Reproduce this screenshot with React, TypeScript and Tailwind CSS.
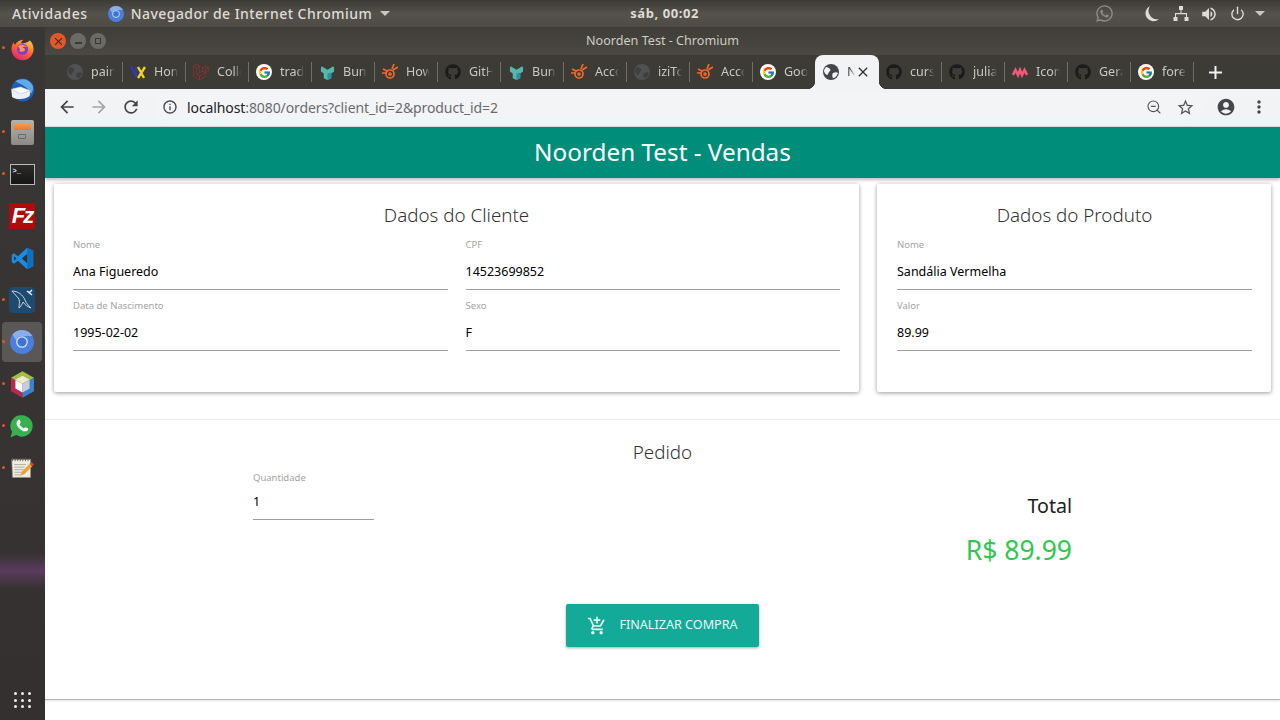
import { FaGithub, FaWhatsapp } from "react-icons/fa"
import { FcGoogle } from "react-icons/fc"
import { SiLaravel } from "react-icons/si"
import {
  MdAccountCircle,
  MdArrowBack,
  MdArrowForward,
  MdClose,
  MdInfoOutline,
  MdMoreVert,
  MdOutlineAddShoppingCart,
  MdRefresh,
  MdStarBorder,
  MdVolumeUp,
} from "react-icons/md"
import { Power, ZoomOut } from "lucide-react"

const DimGlobe = () => (
  <svg width="16" height="16" viewBox="0 0 16 16">
    <circle cx="8" cy="8" r="8" fill="#505154" />
    <path d="M3 3c2 0 3 1 4 2s0 2-1 3-1 3-2 3-3-3-3-4 1-3 2-4zM10 9c2-1 4-1 5 0-1 3-3 5-5 5-1-1-1-4 0-5z" fill="#3f3f3d" />
  </svg>
)

const ActiveGlobe = () => (
  <svg width="16" height="16" viewBox="0 0 16 16">
    <circle cx="8" cy="8" r="8" fill="#45464a" />
    <path d="M3 3c2 0 3 1 4 2s0 2-1 3-1 3-2 3-3-3-3-4 1-3 2-4zM10 9c2-1 4-1 5 0-1 3-3 5-5 5-1-1-1-4 0-5z" fill="#f2f3f5" />
  </svg>
)

const Nx = () => (
  <svg width="16" height="16" viewBox="0 0 16 16" fill="none">
    <path d="M1 2l5 11V3" stroke="#2c3bbd" strokeWidth="2" />
    <path d="M8 3l6 11M15 3L8 14" stroke="#f0d11c" strokeWidth="2.4" />
  </svg>
)

const Bunny = () => (
  <svg width="15" height="15" viewBox="0 0 16 16">
    <path d="M1 3c0-1 1-2 2-1l5 3 5-3c1-1 2 0 2 1v4l-3 2v5l-4 2-4-2V9L1 7z" fill="#55b8ae" />
    <path d="M8 9l4-1v6l-4 2z" fill="#2f8fa3" />
  </svg>
)

const Rabbit = () => (
  <svg width="16" height="16" viewBox="0 0 16 16" fill="none" stroke="#ef6a2e" strokeWidth="1.7">
    <path d="M1 5l4 2M0 9h4M12 0l-2 5M16 3l-5 3" />
    <circle cx="8" cy="10" r="4" />
    <circle cx="8" cy="10" r="1" fill="#ef6a2e" />
  </svg>
)

const Icons8 = () => (
  <svg width="16" height="16" viewBox="0 0 16 16" fill="none">
    <path d="M1 11l2.500-5L6 11l2-5 2 5 2.500-5 2.500 5" stroke="#ee5a78" strokeWidth="2.6" />
  </svg>
)

const Github = () => <FaGithub size={16} color="#1b1b1b" />
const Google = () => (
  <span className="flex h-4 w-4 items-center justify-center rounded-full bg-white">
    <FcGoogle size={13} />
  </span>
)

const tabs = [
  { icon: <DimGlobe />, label: "pain" },
  { icon: <Nx />, label: "Hom" },
  { icon: <SiLaravel size={16} color="#b8282e" />, label: "Colle" },
  { icon: <Google />, label: "trad" },
  { icon: <Bunny />, label: "Bunny" },
  { icon: <Rabbit />, label: "How" },
  { icon: <Github />, label: "GitHub" },
  { icon: <Bunny />, label: "Bunny" },
  { icon: <Rabbit />, label: "Acco" },
  { icon: <DimGlobe />, label: "iziToast" },
  { icon: <Rabbit />, label: "Acco" },
  { icon: <Google />, label: "Goog" },
  { icon: <ActiveGlobe />, label: "N", active: true },
  { icon: <Github />, label: "curso" },
  { icon: <Github />, label: "julian" },
  { icon: <Icons8 />, label: "Icons" },
  { icon: <Github />, label: "Gerad" },
  { icon: <Google />, label: "fore" },
]

const Chromium = ({ size = 16 }: { size?: number }) => (
  <svg width={size} height={size} viewBox="0 0 24 24">
    <circle cx="12" cy="12" r="12" fill="#4a7fdc" />
    <path d="M12 0a12 12 0 0 1 10.400 6H12a6 6 0 0 0-5.800 4.400L2.500 4.600A12 12 0 0 1 12 0z" fill="#8aaeea" />
    <circle cx="12" cy="12" r="5.200" fill="#3f74d6" stroke="#d7e4f8" strokeWidth="1.300" />
  </svg>
)

const dockIcons = [
  {
    dot: true,
    icon: (
      <svg width="25" height="25" viewBox="0 0 34 34">
        <defs>
          <linearGradient id="fx" x1="0.8" y1="0" x2="0.2" y2="1">
            <stop offset="0" stopColor="#ffd23a" />
            <stop offset="0.45" stopColor="#ff6a2b" />
            <stop offset="1" stopColor="#e2206e" />
          </linearGradient>
        </defs>
        <path d="M27 6c3 3 5 7 5 12a15 15 0 0 1-30 0c0-4 1-7 3-10 0 2 1 3 2 4 2-4 6-7 11-7-2 2-3 3-3 5 5 0 8-1 12-4z" fill="url(#fx)" />
        <circle cx="17" cy="18" r="7.500" fill="#7a3ce0" />
        <path d="M11 14c3-3 9-3 12 1-3-1-5-1-6 1 3 0 4 2 3 4-2 2-6 2-8 0 2 0 2-2 1-3z" fill="#ff9a3a" />
      </svg>
    ),
  },
  {
    dot: false,
    icon: (
      <svg width="26" height="26" viewBox="0 0 34 34">
        <circle cx="18" cy="17" r="15" fill="#1b5fb8" />
        <path d="M8 6c7-5 18-4 23 5 1 4 0 8-2 11-3-7-11-12-21-16z" fill="#62a9e8" />
        <path d="M3 16l12-3 13 5-1 7c-6 5-17 5-23 1z" fill="#eef0f4" />
        <path d="M3 16l12 6 13-4-13-5z" fill="#ffffff" stroke="#aab8ca" strokeWidth="0.700" />
      </svg>
    ),
  },
  {
    dot: true,
    icon: (
      <span className="flex h-[25px] w-[23px] flex-col overflow-hidden rounded-[2px] bg-gradient-to-b from-[#b5b2ac] to-[#8d8a85]">
        <span className="mx-[3px] mt-[3px] h-[7px] rounded-[1px] bg-gradient-to-b from-[#f6a04d] to-[#e77a28]" />
        <span className="mx-auto mt-[4px] h-[5px] w-[8px] rounded-[1px] border border-[#6c6a66]" />
      </span>
    ),
  },
  {
    dot: true,
    icon: (
      <span className="flex h-[21px] w-[25px] border border-[#b9b9b6] bg-gradient-to-b from-[#2b2b2b] to-[#161616] pl-[2px] pt-[1px] font-['Liberation_Mono',monospace] text-[7px] font-bold leading-[10px] text-[#e8e8e8]">
        {">_"}
      </span>
    ),
  },
  {
    dot: false,
    icon: (
      <span className="flex h-[26px] w-[26px] items-center justify-center bg-[#b10a0a] font-['Liberation_Sans',sans-serif] text-[22px] font-bold italic leading-none tracking-[-2px] text-white">
        Fz
      </span>
    ),
  },
  {
    dot: false,
    icon: (
      <svg width="23" height="23" viewBox="0 0 30 30">
        <path d="M21 1l8 4v20l-8 4L9 18l-5 4-3-2v-10l3-2 5 4z" fill="#1a8ce0" />
        <path d="M21 1l8 4v20l-8 4z" fill="#0f6fc0" />
        <path d="M21 9l-7 6 7 6z" fill="#33302e" />
        <path d="M4 12l3 3-3 3z" fill="#33302e" />
      </svg>
    ),
  },
  {
    dot: true,
    icon: (
      <svg width="26" height="26" viewBox="0 0 26 26">
        <rect width="26" height="26" rx="4" fill="#1f4a70" />
        <path d="M3 4c6 0 11 4 13 9 1 3 3 5 6 8-3-1-6-3-8-6-1 2-2 5-4 6 0-3 1-6 0-9-2-3-5-5-7-8z" fill="none" stroke="#cfe0ee" strokeWidth="0.900" />
        <path d="M18 4l5 4M23 3l-3 3" stroke="#e6edf3" strokeWidth="1.500" />
      </svg>
    ),
  },
  {
    dot: true,
    icon: <Chromium size={24} />,
    active: true,
  },
  {
    dot: true,
    icon: (
      <svg width="23" height="27" viewBox="0 0 26 30">
        <path d="M13 0l13 7.500L13 15 0 7.500z" fill="#a3bf45" />
        <path d="M0 7.500L13 15v15L0 22.500z" fill="#b62a52" />
        <path d="M26 7.500L13 15v15l13-7.500z" fill="#3c80cf" />
        <path d="M13 5l8 4.500L13 14 5 9.500z" fill="#efe9d3" />
        <path d="M5 10l8 4.500V24l-8-4.500z" fill="#ffffff" />
        <path d="M21 10l-8 4.500V24l8-4.500z" fill="#c8ced8" />
      </svg>
    ),
  },
  {
    dot: true,
    icon: (
      <svg width="28" height="28" viewBox="0 0 34 34">
        <path d="M17 4a13 13 0 1 1-7 24l-7 3 2-7A13 13 0 0 1 17 4z" fill="#36b14e" />
        <path d="M12 10c1-1 2-1 2.500 0l1 3-1.500 2c1 2 3 4 5 5l2-1.500 3 1.200c1 .8.500 2-.5 3-3 2-7 0-10-3s-4.500-7-1.500-9.700z" fill="#ffffff" />
      </svg>
    ),
  },
  {
    dot: true,
    icon: (
      <svg width="24" height="24" viewBox="0 0 28 28">
        <path d="M2 4h22v21H3z" fill="#efece2" stroke="#8f8c82" strokeWidth="0.800" />
        <path d="M3 2v4M6 2v4M9 2v4M12 2v4M15 2v4M18 2v4M21 2v4" stroke="#55534d" strokeWidth="1" />
        <path d="M5 10h14M5 13h12M5 16h11M5 19h9M5 22h8" stroke="#a9a69b" strokeWidth="1" />
        <path d="M12 23l2-5 9-9 3 3-9 9z" fill="#f0a02e" />
        <path d="M23 9l2-2 3 3-2 2z" fill="#d9413a" />
      </svg>
    ),
  },
]

const Field = ({ label, value }: { label: string; value: string }) => (
  <div className="h-[61px]">
    <div className="pt-[2px] text-[9.5px] leading-[14px] text-[#a3a3a3]">{label}</div>
    <div className="mt-[10px] text-[12.5px] leading-[20px] text-black">{value}</div>
    <div className="mt-[7px] h-px bg-[#9e9e9e]" />
  </div>
)

export default function App() {
  return (
    <div className="flex h-[720px] w-[1280px] flex-col overflow-hidden bg-white font-['Noto_Sans',sans-serif]">
      {/* Top bar */}
      <div className="flex h-[27px] shrink-0 items-center bg-gradient-to-b from-[#3b3a35] via-[#55524b] to-[#4d4b44] pl-3 pr-[15px] text-[14px] font-medium text-[#dedcd6]">
        <span className="tracking-[0.6px]">Atividades</span>
        <span className="ml-5 flex items-center gap-[7px] tracking-[0.45px]">
          <Chromium />
          Navegador de Internet Chromium
          <span className="ml-[1px] h-0 w-0 border-x-[5px] border-t-[5px] border-x-transparent border-t-[#c9c7c1]" />
        </span>
        <span className="ml-[240px] text-[13px] font-bold tracking-[0.6px]">sáb, 00:02</span>
        <span className="ml-auto flex items-center text-[#dedcd6]">
          <FaWhatsapp size={19} color="#8e8c86" />
          <svg className="ml-[31px]" width="14" height="16" viewBox="0 0 14 16">
            <path d="M5 0a8 8 0 1 0 9 13A8.500 8.500 0 0 1 5 0z" fill="#dedcd6" />
          </svg>
          <svg className="ml-[14px]" width="16" height="16" viewBox="0 0 16 16" fill="#dedcd6">
            <path d="M6 0h4v4H8.500v3H14v4h1.500v4h-4v-4H13V8.200H3V11h1.500v4h-4v-4H2V7h5.500V4H6z" />
          </svg>
          <MdVolumeUp className="ml-[11px]" size={18} />
          <Power className="ml-[12px]" size={15} strokeWidth={2.2} />
          <span className="ml-[10px] h-0 w-0 border-x-[5px] border-t-[5px] border-x-transparent border-t-[#c9c7c1]" />
        </span>
      </div>

      <div className="flex min-h-0 flex-1">
        {/* Dock */}
        <div className="relative flex w-[45px] shrink-0 flex-col bg-gradient-to-b from-[#393735] to-[#343030]">
          {dockIcons.map((d, i) => (
            <div key={i} className="relative flex h-[42px] w-[45px] shrink-0 items-center justify-center">
              {d.active && <span className="absolute left-[2px] top-[1px] h-[40px] w-[40px] rounded-[4px] bg-[#5a5856]" />}
              {d.dot && <span className="absolute left-[2px] top-[19px] h-[3px] w-[3px] rounded-full bg-[#e95420]" />}
              <span className="relative flex pr-[1px]">{d.icon}</span>
            </div>
          ))}
          <div className="absolute left-0 right-0 top-[526px] h-[36px] bg-gradient-to-b from-transparent via-[#6a3f70] to-transparent opacity-70" />
          <div className="mb-[12px] mt-auto grid w-[18px] grid-cols-3 gap-[3.500px] self-center">
            {Array.from({ length: 9 }).map((_, i) => (
              <span key={i} className="h-[3px] w-[3px] rounded-full bg-[#eeeeee]" />
            ))}
          </div>
        </div>

        {/* Browser */}
        <div className="flex min-w-0 flex-1 flex-col">
          <div className="relative flex h-[28px] shrink-0 items-center justify-center bg-gradient-to-b from-[#3e3d37] to-[#4b4941] text-[12.6px] text-[#cfcdc6]">
            Noorden Test - Chromium
            <span className="absolute left-[5px] top-[6px] flex gap-1">
              <span className="flex h-4 w-4 items-center justify-center rounded-full bg-[#e2572a] text-[#3a2a20]">
                <MdClose size={13} />
              </span>
              <span className="flex h-4 w-4 items-center justify-center rounded-full bg-[#6b6a64]">
                <span className="mt-[4px] h-[2px] w-[7px] bg-[#3b3a35]" />
              </span>
              <span className="flex h-4 w-4 items-center justify-center rounded-full bg-[#6b6a64]">
                <span className="h-[6px] w-[6px] border border-[#3b3a35]" />
              </span>
            </span>
          </div>

          {/* Tab strip */}
          <div className="flex h-[34px] shrink-0 items-stretch bg-[#3c3b35] pl-[15px]">
            {tabs.map((t, i) =>
              t.active ? (
                <div key={i} className="relative flex w-[64px] shrink-0 items-center rounded-t-[8px] bg-[#f2f3f5] pl-[8px] text-[13px] text-[#4a4a4a]">
                  {t.icon}
                  <span className="ml-[8px] w-[8px] overflow-hidden [mask-image:linear-gradient(to_right,black_40%,transparent)]">N</span>
                  <MdClose size={16} color="#333333" />
                  <span className="absolute bottom-0 left-[-8px] h-[8px] w-[8px] bg-[radial-gradient(circle_at_0_0,transparent_8px,#f2f3f5_8.500px)]" />
                  <span className="absolute bottom-0 right-[-8px] h-[8px] w-[8px] bg-[radial-gradient(circle_at_100%_0,transparent_8px,#f2f3f5_8.500px)]" />
                </div>
              ) : (
                <div key={i} className={i === 11 ? "flex w-[62px] shrink-0 items-center py-[7px] pl-[7px]" : "flex w-[63px] shrink-0 items-center py-[7px] pl-[7px]"}>
                  <span className="flex w-[16px] shrink-0 justify-center">{t.icon}</span>
                  <span className="ml-[8px] w-[24px] overflow-hidden whitespace-nowrap text-[12.5px] text-[#c9c8c2] [mask-image:linear-gradient(to_right,black_70%,transparent)]">
                    {t.label}
                  </span>
                  <span className={i === 11 ? "" : "ml-auto h-[20px] w-px bg-[#6f6e68]"} />
                </div>
              ),
            )}
            <div className="flex flex-1 items-center pl-[15px]">
              <svg width="13" height="13" viewBox="0 0 13 13">
                <path d="M6.500 0v13M0 6.500h13" stroke="#f2f2f2" strokeWidth="2" />
              </svg>
            </div>
          </div>

          {/* Toolbar */}
          <div className="flex h-[38px] shrink-0 items-center border-b border-[#d9d9d9] bg-[#f2f3f5] pb-[1px] pl-[12px] text-[#4c4d4f]">
            <MdArrowBack size={20} color="#45464a" />
            <MdArrowForward size={20} color="#a4a5a8" className="ml-[12px]" />
            <MdRefresh size={20} color="#45464a" className="ml-[12px]" />
            <div className="ml-[12px] flex h-[30px] w-[1050px] items-center rounded-full bg-[#f3f4f6] pl-[9px] pr-[8px]">
              <MdInfoOutline size={16} color="#45464a" />
              <span className="ml-[9px] text-[14px] tracking-[-0.1px] text-[#6a6b6e]">
                <span className="text-[#202124]">localhost</span>:8080/orders?client_id=2&product_id=2
              </span>
              <ZoomOut size={16} color="#55565a" strokeWidth={1.7} className="ml-auto" />
              <MdStarBorder size={19} color="#55565a" className="ml-[14px]" />
            </div>
            <MdAccountCircle size={20} color="#45464a" className="ml-[13px]" />
            <MdMoreVert size={20} color="#45464a" className="ml-[13px]" />
          </div>

          {/* Page */}
          <div className="relative z-10 flex h-[51px] shrink-0 items-center justify-center bg-[#008e7a] text-[24.3px] text-white shadow-[0_2px_3px_rgba(0,0,0,0.25)]">
            Noorden Test - Vendas
          </div>

          <div className="flex gap-[18px] px-[9px] pt-[6px]">
            <div className="h-[208px] w-[805px] rounded-[2px] bg-white px-[19px] shadow-[0_1px_4px_rgba(0,0,0,0.4)]">
              <div className="pt-[17px] text-center text-[18.8px] font-light leading-[28px] text-[#333333]">Dados do Cliente</div>
              <div className="mt-[7px] grid grid-cols-2 gap-x-[18px]">
                <Field label="Nome" value="Ana Figueredo" />
                <Field label="CPF" value="14523699852" />
                <Field label="Data de Nascimento" value="1995-02-02" />
                <Field label="Sexo" value="F" />
              </div>
            </div>
            <div className="h-[208px] w-[394px] rounded-[2px] bg-white pl-[20px] pr-[19px] shadow-[0_1px_4px_rgba(0,0,0,0.4)]">
              <div className="pt-[17px] text-center text-[18.8px] font-light leading-[28px] text-[#333333]">Dados do Produto</div>
              <div className="mt-[7px]">
                <Field label="Nome" value="Sandália Vermelha" />
                <Field label="Valor" value="89.99" />
              </div>
            </div>
          </div>

          <div className="mt-[27px] h-[281px] border-b border-t border-b-[#b5b5b5] border-t-[#ececec] pt-[19px] shadow-[0_1px_2px_rgba(0,0,0,0.12)]">
            <div className="text-center text-[18.8px] font-light leading-[26px] text-[#333333]">Pedido</div>
            <div className="flex justify-between px-[208px]">
              <div className="w-[121px] pt-[6px]">
                <div className="text-[9.5px] leading-[14px] text-[#a3a3a3]">Quantidade</div>
                <div className="mt-[7px] text-[12.5px] leading-[20px] text-black">1</div>
                <div className="mt-[7px] h-px bg-[#9e9e9e]" />
              </div>
              <div className="pt-[26px] text-right">
                <div className="text-[19.6px] leading-[30px] text-[#222222]">Total</div>
                <div className="mt-[9px] text-[26.5px] leading-[40px] text-[#2fc750]">R$ 89.99</div>
              </div>
            </div>
            <div className="mt-[34px] flex justify-center">
              <button className="flex h-[43px] w-[193px] items-center justify-center gap-[12px] rounded-[2px] bg-[#13ab98] text-[12.6px] text-[#e8f7f5] shadow-[0_1px_3px_rgba(0,0,0,0.35)]">
                <MdOutlineAddShoppingCart size={20} />
                FINALIZAR COMPRA
              </button>
            </div>
          </div>
        </div>
      </div>
    </div>
  )
}
